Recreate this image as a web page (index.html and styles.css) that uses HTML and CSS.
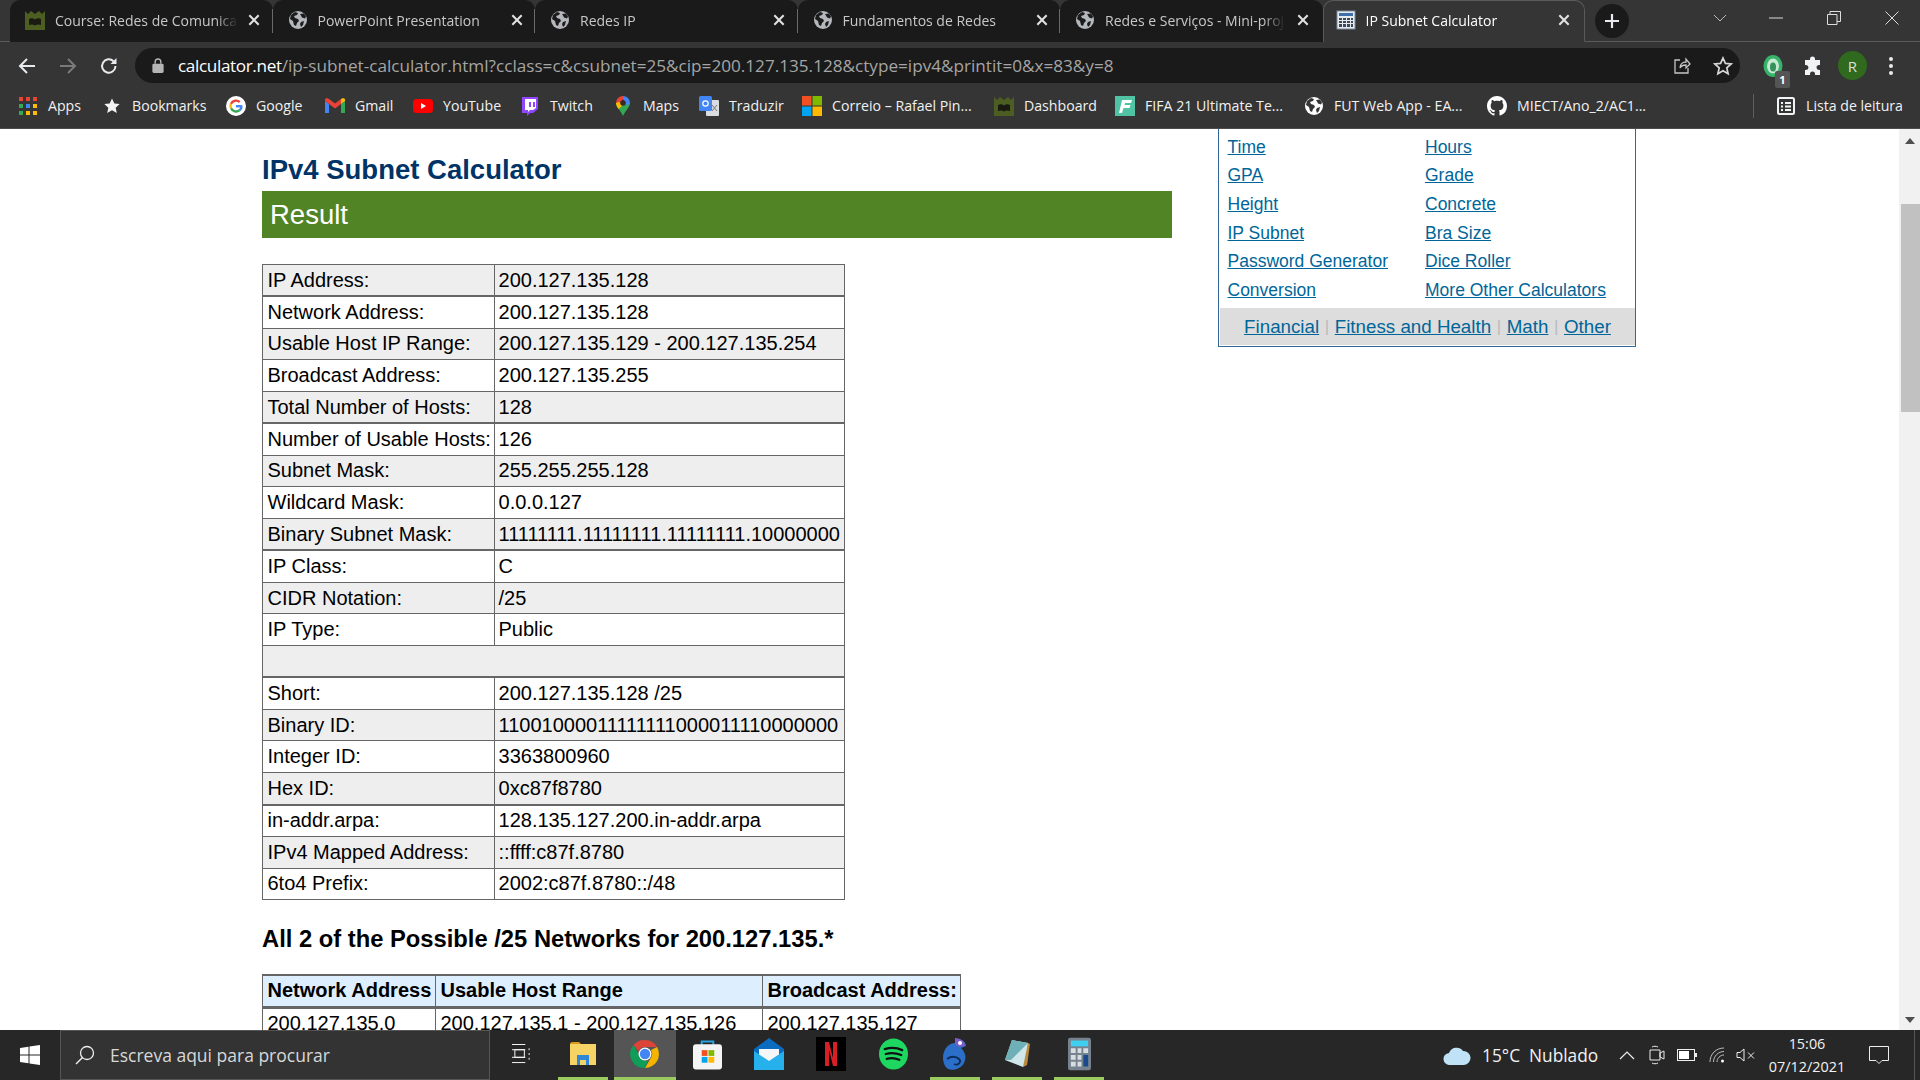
FILE: index.html
```html
<!DOCTYPE html>
<html lang="en">
<head>
<meta charset="utf-8">
<title>IP Subnet Calculator</title>
<link rel="stylesheet" href="styles.css">
</head>
<body>
<svg class="defs" aria-hidden="true">
  <symbol id="globe" viewBox="0 0 20 20">
    <circle cx="10" cy="10" r="9" fill="#b4b7bb"/>
    <path d="M3 5l4-3 3 1-1 2-3 1 1 2 3 1 1 2-2 2-1 3-2-1-1-4-3-2zM12 4l4-.5 2 3-1 2-3-1-1-2zM13 12l3-1-1 4-2 2-1-3z" fill="#1b1b1b"/>
  </symbol>
  <symbol id="globew" viewBox="0 0 20 20">
    <circle cx="10" cy="10" r="9" fill="#fff"/>
    <path d="M3 5l4-3 3 1-1 2-3 1 1 2 3 1 1 2-2 2-1 3-2-1-1-4-3-2zM12 4l4-.5 2 3-1 2-3-1-1-2zM13 12l3-1-1 4-2 2-1-3z" fill="#353535"/>
  </symbol>
  <symbol id="crown" viewBox="0 0 20 20">
    <path d="M0 1l3 3 3-3 4 3 4-3 3 3 3-3v19H0z" fill="#4c5e22"/>
    <path d="M4 9c2-1 4-1 6 .5 2-1.500 4-1.500 6-.5v6c-2-.8-4-.8-6 .5-2-1.300-4-1.300-6-.5z" fill="#1a1a12"/>
  </symbol>
  <symbol id="close" viewBox="0 0 12 12">
    <path d="M2 2l8 8M10 2l-8 8" stroke="currentColor" stroke-width="1.800" fill="none"/>
  </symbol>
</svg>

<header class="browser">
  <div class="tabstrip">
    <div class="tab sep">
      <svg class="fav"><use href="#crown"/></svg>
      <span class="title">Course: Redes de Comunicações</span>
      <svg class="x"><use href="#close"/></svg>
    </div>
    <div class="tab sep">
      <svg class="fav"><use href="#globe"/></svg>
      <span class="title">PowerPoint Presentation</span>
      <svg class="x"><use href="#close"/></svg>
    </div>
    <div class="tab sep">
      <svg class="fav"><use href="#globe"/></svg>
      <span class="title">Redes IP</span>
      <svg class="x"><use href="#close"/></svg>
    </div>
    <div class="tab sep">
      <svg class="fav"><use href="#globe"/></svg>
      <span class="title">Fundamentos de Redes</span>
      <svg class="x"><use href="#close"/></svg>
    </div>
    <div class="tab">
      <svg class="fav"><use href="#globe"/></svg>
      <span class="title short">Redes e Serviços - Mini-projeto</span>
      <svg class="x"><use href="#close"/></svg>
    </div>
    <div class="tab active">
      <svg class="fav" viewBox="0 0 20 20">
        <rect x="1" y="1" width="18" height="18" fill="#e8eaec" stroke="#7a8ca0"/>
        <rect x="3" y="3" width="14" height="3" fill="#3f6fa8"/>
        <path d="M3 8h3v2H3zM7 8h3v2H7zM11 8h3v2h-3zM15 8h2v2h-2zM3 11h3v2H3zM7 11h3v2H7zM11 11h3v2h-3zM15 11h2v2h-2zM3 14h3v3H3zM7 14h3v3H7zM11 14h3v3h-3zM15 14h2v3h-2z" fill="#3a4a5a"/>
      </svg>
      <span class="title">IP Subnet Calculator</span>
      <svg class="x"><use href="#close"/></svg>
    </div>
    <div class="newtab">
      <svg viewBox="0 0 16 16" width="16" height="16"><path d="M8 1v14M1 8h14" stroke="#e8eaed" stroke-width="2.200"/></svg>
    </div>
    <div class="winctl">
      <svg class="w-chev" viewBox="0 0 14 8" width="14" height="8"><path d="M1 1l6 6 6-6" stroke="#bbb" fill="none"/></svg>
      <svg class="w-min" viewBox="0 0 14 2" width="14" height="2"><path d="M0 1h14" stroke="#ddd"/></svg>
      <svg class="w-res" viewBox="0 0 14 14" width="14" height="14"><path d="M.5 3.500h9.500v10H.5zM3 3.500V.5h10.500v10H10" stroke="#ddd" fill="none"/></svg>
      <svg class="w-x" viewBox="0 0 14 14" width="14" height="14"><path d="M.5.5l13 13M13.500.5l-13 13" stroke="#ddd" fill="none"/></svg>
    </div>
  </div>

  <div class="toolbar">
    <svg class="nav nav-back" viewBox="0 0 18 18" width="18" height="18"><path d="M9 2L2 9l7 7M2 9h15" stroke="#e8eaed" stroke-width="2" fill="none"/></svg>
    <svg class="nav nav-fwd" viewBox="0 0 18 18" width="18" height="18"><path d="M9 2l7 7-7 7M16 9H1" stroke="#7a7a7a" stroke-width="2" fill="none"/></svg>
    <svg class="nav nav-rel" viewBox="0 0 18 18" width="18" height="18"><path d="M15.500 9A6.700 6.700 0 1 1 13.500 4.200" stroke="#e8eaed" stroke-width="2" fill="none"/><path d="M16.500 1v6h-6z" fill="#e8eaed"/></svg>
    <div class="omnibox">
      <svg class="lock" viewBox="0 0 12 16" width="12" height="15"><rect x="0" y="6" width="12" height="10" rx="1.500" fill="#b5b5b5"/><path d="M3 6V4a3 3 0 0 1 6 0v2" stroke="#b5b5b5" stroke-width="1.500" fill="none"/></svg>
      <span class="url"><span class="host">calculator.net</span>/ip-subnet-calculator.html?cclass=c&amp;csubnet=25&amp;cip=200.127.135.128&amp;ctype=ipv4&amp;printit=0&amp;x=83&amp;y=8</span>
      <svg class="omni-share" viewBox="0 0 18 18" width="18" height="18"><path d="M7 3H2v13h13v-5M7 11c0-4 3-6 6-6V2l4 5-4 4V8c-3 0-5 1-6 3z" stroke="#c4c7c5" stroke-width="1.300" fill="none"/></svg>
      <svg class="omni-star" viewBox="0 0 20 20" width="20" height="20"><path d="M10 2l2.400 5.400 5.800.6-4.400 3.900 1.300 5.800L10 14.700l-5.100 3 1.300-5.800L1.800 8l5.800-.6z" stroke="#d5d7d9" stroke-width="1.700" fill="none"/></svg>
    </div>
    <div class="ext-green">
      <svg viewBox="0 0 20 22" width="20" height="24"><ellipse cx="10" cy="11" rx="9.500" ry="11" fill="#35b46a"/><ellipse cx="10" cy="11" rx="6" ry="7.500" fill="#c5e9d2"/><ellipse cx="10" cy="12" rx="3" ry="4.500" fill="#35905c"/></svg>
      <span class="badge">1</span>
    </div>
    <svg class="puzzle" viewBox="0 0 20 20" width="20" height="20"><path d="M7 3a2.500 2.500 0 0 1 5 0v1h5v5h-1a2.500 2.500 0 0 0 0 5h1v5h-5v-1a2.500 2.500 0 0 0-5 0v1H2v-5h1a2.500 2.500 0 0 0 0-5H2V4h5z" fill="#f1f3f4"/></svg>
    <div class="avatar">R</div>
    <svg class="kebab" viewBox="0 0 4 18" width="4" height="18"><circle cx="2" cy="2" r="2" fill="#e8eaed"/><circle cx="2" cy="9" r="2" fill="#e8eaed"/><circle cx="2" cy="16" r="2" fill="#e8eaed"/></svg>
  </div>

  <nav class="bookmarks">
    <a class="bm bm-apps"><svg viewBox="-1 -1 20 20"><path d="M0 0h4v4H0z" fill="#ea4335"/><path d="M7 0h4v4H7z" fill="#ea4335"/><path d="M14 0h4v4h-4z" fill="#ea4335"/><path d="M0 7h4v4H0z" fill="#34a853"/><path d="M7 7h4v4H7z" fill="#4285f4"/><path d="M14 7h4v4h-4z" fill="#fbbc05"/><path d="M0 14h4v4H0z" fill="#34a853"/><path d="M7 14h4v4H7z" fill="#fbbc05"/><path d="M14 14h4v4h-4z" fill="#fbbc05"/></svg><span>Apps</span></a>
    <a class="bm bm-marks"><svg viewBox="-2 -2 24 24"><path d="M10 1l2.800 6 6.400.7-4.800 4.300 1.400 6.400L10 15.100l-5.800 3.300 1.400-6.400L.8 7.700l6.400-.7z" fill="#f1f3f4"/></svg><span>Bookmarks</span></a>
    <a class="bm bm-google"><svg viewBox="0 0 20 20"><circle cx="10" cy="10" r="10" fill="#fff"/><path d="M15.500 10.200H10" stroke="#4285f4" stroke-width="2.400"/><path d="M15.500 9.500a5.600 5.600 0 0 1-2 4.800" stroke="#4285f4" stroke-width="2.400" fill="none"/><path d="M13.500 14.300a5.600 5.600 0 0 1-8.500-2" stroke="#34a853" stroke-width="2.400" fill="none"/><path d="M5 12.300a5.600 5.600 0 0 1 0-4.600" stroke="#fbbc05" stroke-width="2.400" fill="none"/><path d="M5 7.700a5.600 5.600 0 0 1 8.700-1.700" stroke="#ea4335" stroke-width="2.400" fill="none"/></svg><span>Google</span></a>
    <a class="bm bm-gmail"><svg viewBox="0 -2 20 20"><path d="M0 3v12h4V6z" fill="#4285f4"/><path d="M16 6v9h4V3z" fill="#34a853"/><path d="M0 3l4 3 6 4.500 6-4.500V1l-6 4.500L4 1 2 0 0 1z" fill="#ea4335"/><path d="M16 1v5l4-3V1l-2-1z" fill="#fbbc05"/></svg><span>Gmail</span></a>
    <a class="bm bm-yt"><svg viewBox="0 -3 20 20"><rect width="20" height="14" rx="3.500" fill="#f00"/><path d="M8 4l5 3-5 3z" fill="#fff"/></svg><span>YouTube</span></a>
    <a class="bm bm-tw"><svg viewBox="-1 0 20 20"><path d="M1 1h16v12l-5 4H9l-3 3v-3H1z" fill="#9146ff"/><path d="M4 3h11v9l-3 2H9l-2 2v-2H4z" fill="#fff"/><path d="M8 6h2v5H8zM12 6h2v5h-2z" fill="#9146ff"/></svg><span>Twitch</span></a>
    <a class="bm bm-maps"><svg viewBox="-3 0 20 20"><path d="M7 20C5 15 0 11 0 7l7-1 7 1c0 4-5 8-7 13z" fill="#34a853"/><path d="M7 0a7 7 0 0 0-7 7l3 3 4-7z" fill="#ea4335"/><path d="M7 0a7 7 0 0 1 7 7L11 10 7 3z" fill="#4285f4"/><path d="M0 7c0 2 1 4 2.500 6L7 9 3 6z" fill="#fbbc05"/><circle cx="7" cy="7" r="2.800" fill="#3b2a1e"/></svg><span>Maps</span></a>
    <a class="bm bm-trad"><svg viewBox="0 0 20 20"><rect x="7" y="4" width="13" height="16" rx="1" fill="#dadce0"/><rect x="0" y="0" width="13" height="15" rx="1.500" fill="#4285f4"/><circle cx="6.500" cy="7.500" r="2.700" fill="none" stroke="#fff" stroke-width="1.200"/><path d="M13 9l5 6M18 9l-5 6" stroke="#777" stroke-width="1"/></svg><span>Traduzir</span></a>
    <a class="bm bm-mail"><svg viewBox="0 0 20 20"><path d="M0 0h9.500v9.500H0z" fill="#f25022"/><path d="M10.500 0H20v9.500h-9.500z" fill="#7fba00"/><path d="M0 10.500h9.500V20H0z" fill="#00a4ef"/><path d="M10.500 10.500H20V20h-9.500z" fill="#ffb900"/></svg><span>Correio – Rafael Pin...</span></a>
    <a class="bm bm-dash"><svg><use href="#crown"/></svg><span>Dashboard</span></a>
    <a class="bm bm-fifa"><svg viewBox="0 0 20 20"><rect width="20" height="20" fill="#4fc3a4"/><path d="M7 4h10l-1 3H10l-.5 2h6l-1 3H8.500L7 17H4z" fill="#fff"/></svg><span>FIFA 21 Ultimate Te...</span></a>
    <a class="bm bm-fut"><svg><use href="#globew"/></svg><span>FUT Web App - EA...</span></a>
    <a class="bm bm-gh"><svg viewBox="0 0 16 16"><path fill="#fff" d="M8 0C3.580 0 0 3.580 0 8c0 3.540 2.290 6.530 5.470 7.590.4.07.55-.17.55-.38 0-.19-.01-.82-.01-1.490-2.010.37-2.530-.49-2.690-.94-.09-.23-.48-.94-.82-1.130-.28-.15-.68-.52-.01-.53.63-.01 1.080.58 1.230.82.72 1.210 1.870.87 2.330.66.07-.52.28-.87.51-1.070-1.780-.2-3.640-.89-3.640-3.950 0-.87.31-1.590.82-2.150-.08-.2-.36-1.020.08-2.120 0 0 .67-.21 2.200.82.64-.18 1.320-.27 2-.27.68 0 1.360.09 2 .27 1.530-1.040 2.200-.82 2.200-.82.44 1.100.16 1.920.08 2.120.51.56.82 1.270.82 2.150 0 3.070-1.870 3.750-3.650 3.950.29.25.54.73.54 1.480 0 1.070-.01 1.930-.01 2.200 0 .21.15.46.55.38A8.013 8.013 0 0016 8c0-4.420-3.580-8-8-8z"/></svg><span>MIECT/Ano_2/AC1...</span></a>
    <a class="bm bm-read"><svg viewBox="-1 -1 20 20"><rect x="1" y="1" width="16" height="16" rx="1.500" fill="none" stroke="#f1f3f4" stroke-width="2"/><path d="M4 5h2v2H4zM8 5h6v2H8zM4 8.500h2v2H4zM8 8.500h6v2H8zM4 12h2v2H4zM8 12h6v2H8z" fill="#f1f3f4"/></svg><span>Lista de leitura</span></a>
  </nav>
</header>

<div class="viewport">
  <div class="page">
    <main class="content">
      <h1 class="pagetitle">IPv4 Subnet Calculator</h1>
      <h2 class="result">Result</h2>
      <table class="info">
        <tr><td>IP Address:</td><td>200.127.135.128</td></tr>
        <tr><td>Network Address:</td><td>200.127.135.128</td></tr>
        <tr><td>Usable Host IP Range:</td><td>200.127.135.129 - 200.127.135.254</td></tr>
        <tr><td>Broadcast Address:</td><td>200.127.135.255</td></tr>
        <tr><td>Total Number of Hosts:</td><td>128</td></tr>
        <tr><td>Number of Usable Hosts:</td><td>126</td></tr>
        <tr><td>Subnet Mask:</td><td>255.255.255.128</td></tr>
        <tr><td>Wildcard Mask:</td><td>0.0.0.127</td></tr>
        <tr><td>Binary Subnet Mask:</td><td>11111111.11111111.11111111.10000000</td></tr>
        <tr><td>IP Class:</td><td>C</td></tr>
        <tr><td>CIDR Notation:</td><td>/25</td></tr>
        <tr><td>IP Type:</td><td>Public</td></tr>
        <tr><td colspan="2">&nbsp;</td></tr>
        <tr><td>Short:</td><td>200.127.135.128 /25</td></tr>
        <tr><td>Binary ID:</td><td>11001000011111111000011110000000</td></tr>
        <tr><td>Integer ID:</td><td>3363800960</td></tr>
        <tr><td>Hex ID:</td><td>0xc87f8780</td></tr>
        <tr><td>in-addr.arpa:</td><td>128.135.127.200.in-addr.arpa</td></tr>
        <tr><td>IPv4 Mapped Address:</td><td>::ffff:c87f.8780</td></tr>
        <tr><td>6to4 Prefix:</td><td>2002:c87f.8780::/48</td></tr>
      </table>
      <h3 class="subhead">All 2 of the Possible /25 Networks for 200.127.135.*</h3>
      <table class="nets">
        <colgroup><col class="c1"><col class="c2"><col class="c3"></colgroup>
        <tr><th>Network Address</th><th>Usable Host Range</th><th>Broadcast Address:</th></tr>
        <tr><td>200.127.135.0</td><td>200.127.135.1 - 200.127.135.126</td><td>200.127.135.127</td></tr>
      </table>
    </main>
    <aside class="side">
      <div class="sidelinks">
        <a>Time</a><a>Hours</a>
        <a>GPA</a><a>Grade</a>
        <a>Height</a><a>Concrete</a>
        <a>IP Subnet</a><a>Bra Size</a>
        <a>Password Generator</a><a>Dice Roller</a>
        <a>Conversion</a><a>More Other Calculators</a>
      </div>
      <div class="sidefoot"><a>Financial</a><i>|</i><a>Fitness and Health</a><i>|</i><a>Math</a><i>|</i><a>Other</a></div>
    </aside>
  </div>
  <div class="scrollbar">
    <div class="arrow up"></div>
    <div class="thumb"></div>
    <div class="arrow down"></div>
  </div>
</div>

<footer class="taskbar">
  <div class="start"><svg viewBox="0 0 20 20" width="20" height="20"><path d="M0 3l8.500-1.200V9.500H0zM9.500 1.600L20 0v9.500H9.500zM0 10.500h8.500v7.700L0 17zM9.500 10.500H20V20L9.500 18.400z" fill="#fff"/></svg></div>
  <div class="search">
    <svg viewBox="0 0 20 20" width="20" height="20"><circle cx="12" cy="8" r="6.500" stroke="#eee" stroke-width="1.300" fill="none"/><path d="M7.500 12.500L1 19" stroke="#eee" stroke-width="1.500"/></svg>
    <span>Escreva aqui para procurar</span>
  </div>
  <div class="tb"><svg viewBox="0 0 20 20" width="19" height="20"><path d="M0 0h14M0 19h14M3 5.500h10v8H3zM0 5.500h14M0 13.500h14M18 4v2M18 9v2M18 14v2" stroke="#fff" fill="none"/></svg></div>
  <div class="tb run"><svg viewBox="0 0 28 26" width="28" height="26"><path d="M1 3c0-1 1-2 2-2h7l2 2h-11z" fill="#d99a1c"/><path d="M1 3h26v21H1z" fill="#f6d365"/><path d="M8 24V14h12v10h-3v-5h-6v5z" fill="#2f87d8"/></svg></div>
  <div class="tb run on"><svg viewBox="0 0 30 30" width="30" height="30"><path d="M15 1a14 14 0 0 1 12.100 7H15a7 7 0 0 0-6.500 4.400L3.500 6A14 14 0 0 1 15 1z" fill="#db4437"/><path d="M27.100 8A14 14 0 0 1 15 29l6-10.500A7 7 0 0 0 21 11z" fill="#f4b400"/><path d="M3.500 6L9 16a7 7 0 0 0 9 5.500L15 29A14 14 0 0 1 3.500 6z" fill="#0f9d58"/><circle cx="15" cy="15" r="6.500" fill="#fff"/><circle cx="15" cy="15" r="5.200" fill="#4285f4"/></svg></div>
  <div class="tb"><svg viewBox="0 0 30 32" width="29" height="32"><path d="M9 8V3h12v5" stroke="#2aa3e0" stroke-width="2" fill="none"/><rect y="6" width="30" height="26" rx="3" fill="#f4f4f4"/><path d="M9 12h6v6H9z" fill="#f25022"/><path d="M16 12h6v6h-6z" fill="#7fba00"/><path d="M9 19h6v6H9z" fill="#00a4ef"/><path d="M16 19h6v6h-6z" fill="#ffb900"/></svg></div>
  <div class="tb"><svg viewBox="0 0 30 32" width="30" height="32"><path d="M0 11L15 0l15 11v21H0z" fill="#0a6cc0"/><path d="M5 11h20v9L15 25 5 20z" fill="#f4f6f8"/><path d="M0 13l15 10 15-10v19H0z" fill="#27b1ec"/></svg></div>
  <div class="tb"><svg viewBox="0 0 30 34" width="30" height="34"><rect width="30" height="34" fill="#000"/><path d="M9 5h4l4 16V5h4v24h-4L13 13v16H9z" fill="#d81f26"/></svg></div>
  <div class="tb"><svg viewBox="0 0 30 32" width="29" height="32"><ellipse cx="15" cy="16" rx="15" ry="16" fill="#1ed760"/><path d="M6 11c6-2 13-1.500 18 1M7 16c5-1.500 11-1 16 1M8 21c4-1 9-.8 13 1" stroke="#111" stroke-width="2.400" fill="none" stroke-linecap="round"/></svg></div>
  <div class="tb run"><svg viewBox="0 0 26 34" width="26" height="34"><path d="M15 2c5 0 9 3 9 7l-5 2c4 4 6 9 3 15-3 6-11 8-16 6C1 29 0 20 2 15 4 9 9 6 13 6z" fill="#2c6fc9"/><path d="M13 1c6 0 10 4 10 8l-6 1-4-3z" fill="#7c5cc9"/><circle cx="18" cy="6" r="2" fill="#fff"/><path d="M5 22c4-3 9-3 12 0s-1 7-5 5" stroke="#0c2c5a" stroke-width="1.800" fill="none"/></svg></div>
  <div class="tb run"><svg viewBox="0 0 28 30" width="28" height="30"><path d="M9 1l16 3-1 21-4 3-18-7z" fill="#cfe6ea"/><path d="M9 1l16 3-17 17-6-0z" fill="#6fb0b8"/><path d="M25 4l2 1-3 21-4 2z" fill="#b98a3e"/></svg></div>
  <div class="tb run"><svg viewBox="0 0 24 34" width="23" height="34"><rect width="24" height="34" rx="2.500" fill="#76838f"/><rect x="3" y="3" width="18" height="6" fill="#3fd0f0"/><path d="M3 11h5v5H3zM10 11h4v5h-4zM16 11h5v5h-5zM3 18h5v5H3zM10 18h4v5h-4zM3 25h5v5H3zM10 25h4v5h-4z" fill="#d8dde2"/><rect x="16" y="18" width="5" height="12" fill="#164a8a"/></svg></div>
  <div class="tray">
    <svg class="t-cloud" viewBox="0 0 28 20" width="28" height="20"><path d="M7 20a6 6 0 0 1-1-12A8 8 0 0 1 20 6a7 7 0 0 1 1 14z" fill="#bfe2f7"/></svg>
    <span class="t-weather">15°C&nbsp; Nublado</span>
    <span class="t-ico"><svg viewBox="0 0 16 10" width="16" height="10"><path d="M1 9l7-7 7 7" stroke="#eee" stroke-width="1.200" fill="none"/></svg></span>
    <span class="t-ico"><svg viewBox="0 0 16 20" width="16" height="20"><path d="M1 5h10v10H1zM11 8l4-2v8l-4-2zM3 2c2-1 4-1 6 0M3 18c2 1 4 1 6 0" stroke="#eee" fill="none"/></svg></span>
    <span class="t-ico"><svg viewBox="0 0 20 12" width="20" height="12"><rect x=".5" y=".5" width="17" height="11" stroke="#eee" fill="none"/><rect x="2" y="2" width="10" height="8" fill="#fff"/><rect x="18" y="4" width="2" height="4" fill="#eee"/></svg></span>
    <span class="t-ico"><svg viewBox="0 0 16 16" width="16" height="16"><path d="M1 15C1 7 7 1 15 1M4.500 15c0-6 5-10.500 10.500-10.500M8 15c0-3.500 3-7 7-7" stroke="#bbb" fill="none"/><circle cx="13.500" cy="14" r="1.500" fill="#fff"/></svg></span>
    <span class="t-ico t-mute"><svg viewBox="0 0 20 14" width="20" height="14"><path d="M1 4.500h3L8 1v12L4 9.500H1zM12 4.500l6 6M18 4.500l-6 6" stroke="#eee" fill="none"/></svg></span>
    <div class="clock"><span>15:06</span><span>07/12/2021</span></div>
    <span class="t-note"><svg viewBox="0 0 20 20" width="20" height="20"><path d="M.5 1.500h19v14h-6.500L10 18.500 7 15.500H.5z" stroke="#eee" fill="none"/></svg></span>
    <span class="t-desk"></span>
  </div>
</footer>
</body>
</html>
```
FILE: styles.css
```css
* { box-sizing: border-box; }
html, body { margin: 0; height: 100%; overflow: hidden; }
body { display: flex; flex-direction: column; width: 1920px; height: 1080px; font-family: "Liberation Sans", Arial, sans-serif; background: #fff; }
.defs { position: absolute; width: 0; height: 0; }

/* browser chrome */
.browser { flex: none; background: #353535; color: #fff; font-family: "Open Sans", "Noto Sans", sans-serif; }
.tabstrip { height: 42px; display: flex; padding-left: 10px; border-bottom: 1px solid #5a5a5a; align-items: stretch; }
.tab { width: 262.500px; height: 42px; flex: none; display: flex; align-items: center; padding: 0 0 2px 15px; background: #1a1a1a; border-radius: 10px 10px 0 0; position: relative; color: #c8c8c8; font-size: 14px; }
.tab.sep::after { content: ""; position: absolute; right: 0; top: 9px; height: 24px; width: 1px; background: #6a6a6a; }
.tab .fav { width: 20px; height: 20px; flex: none; margin-right: 10px; }
.tab .title { width: 183px; overflow: hidden; white-space: nowrap; flex: none; -webkit-mask-image: linear-gradient(to right, #000 88%, transparent 100%); mask-image: linear-gradient(to right, #000 88%, transparent 100%); }
.tab .title.short { width: 180px; margin-right: 2px; }
.tab .x { width: 14px; height: 14px; flex: none; margin-left: 9px; color: #e0e0e0; }
.tab.active { background: #353535; color: #fff; border: 1px solid #5a5a5a; border-bottom-color: #353535; width: 262px; padding-left: 12px; }
.tab.active .x { margin-left: 8px; }
.newtab { width: 34px; height: 34px; flex: none; margin: 4px 0 0 10px; border-radius: 50%; background: #1a1a1a; display: flex; align-items: center; justify-content: center; }
.winctl { flex: 1; display: flex; align-items: center; height: 36px; }
.winctl svg { flex: none; }
.w-chev { margin-left: 84px; }
.w-min { margin-left: 42px; }
.w-res { margin-left: 44px; }
.w-x { margin-left: 44px; }

.toolbar { height: 43px; display: flex; align-items: center; padding: 4px 0 0 18px; }
.nav { flex: none; margin-right: 23px; }
.nav-rel { margin-right: 17px; }
.omnibox { width: 1605px; height: 35px; border-radius: 18px; background: #1a1a1a; display: flex; align-items: center; padding-left: 17px; flex: none; }
.lock { flex: none; margin-right: 14px; }
.url { flex: none; width: 1495px; font-size: 17.150px; color: #a5a5a5; white-space: nowrap; overflow: hidden; font-family: "Open Sans", sans-serif; }
.host { color: #fff; letter-spacing: -.37px; }
.omni-share { flex: none; }
.omni-star { flex: none; margin-left: 22px; }
.ext-green { width: 20px; height: 24px; margin-left: 23px; position: relative; flex: none; }
.badge { position: absolute; right: -7px; bottom: -10px; width: 15px; height: 17px; background: #555; color: #fff; font-size: 11px; font-weight: 700; display: flex; align-items: center; justify-content: center; border-radius: 2px; }
.puzzle { flex: none; margin-left: 20px; }
.avatar { width: 29px; height: 29px; border-radius: 50%; background: #2f6a1e; color: #ddd; font-size: 15px; display: flex; align-items: center; justify-content: center; flex: none; margin-left: 15px; }
.kebab { flex: none; margin-left: 22px; }

.bookmarks { height: 44px; display: flex; align-items: center; border-bottom: 1px solid #4d4d4d; font-size: 14.150px; padding: 0 0 2px 18px; }
.bm { display: flex; align-items: center; flex: none; white-space: nowrap; color: #f1f1f1; }
.bm svg { flex: none; width: 20px; height: 20px; margin-right: 10px; }
.bm-apps { width: 84px; }
.bm-marks { width: 124px; }
.bm-google { width: 99px; }
.bm-gmail { width: 88px; }
.bm-yt { width: 107px; }
.bm-tw { width: 93px; }
.bm-maps { width: 86px; }
.bm-trad { width: 103px; }
.bm-mail { width: 192px; }
.bm-dash { width: 121px; }
.bm-fifa { width: 189px; }
.bm-fut { width: 183px; }
.bm-gh { width: 266px; }
.bm-read { flex: none; padding-left: 22px; border-left: 1px solid #5f5f5f; height: 24px; }

/* page */
.viewport { flex: 1; min-height: 0; display: flex; overflow: hidden; }
.page { flex: 1; display: flex; padding-left: 262px; align-items: flex-start; overflow: hidden; color: #000; }
.content { width: 910px; flex: none; padding-top: 22px; }
.pagetitle { margin: 0 0 3px; font-size: 27.500px; line-height: 37px; font-weight: 700; color: #003366; }
.result { margin: 0; height: 47px; background: #518425; color: #fff; font-size: 27.500px; font-weight: 400; line-height: 47px; padding-left: 8px; }
.info { margin-top: 26px; border-collapse: collapse; font-size: 20px; }
.info td { height: 31.770px; padding: 0 4.500px 1px; border: 1px solid #666; line-height: 24px; white-space: nowrap; }
.info td:first-child { padding-right: 3.500px; }
.info td:nth-child(2) { padding-left: 3.100px; }
.info tr:nth-child(odd) { background: #eee; }
.info tr:nth-child(4n+1) td { border-bottom-width: 2px; }
.subhead { margin: 24px 0 0; font-size: 23.750px; line-height: 30px; font-weight: 700; color: #000; }
.nets { margin-top: 20px; border-collapse: collapse; font-size: 20px; width: 698px; table-layout: fixed; }
.c1 { width: 173px; }
.c2 { width: 327px; }
.c3 { width: 198px; }
.nets th, .nets td { padding: 0 4.500px 1px; text-align: left; border: 1px solid #666; height: 32px; white-space: nowrap; }
.nets th { background: #ddeeff; border-top-width: 2px; border-bottom-width: 3px; }

.side { width: 418px; flex: none; margin-left: 46px; border: 1px solid #336699; border-top: 0; padding: 4px 0 1px 1px; font-size: 17.500px; }
.side a { color: #006699; text-decoration: underline; }
.sidelinks { display: grid; grid-template-columns: 197.500px 1fr; grid-auto-rows: 28.600px; align-items: center; padding: 0 0 3px 7.500px; }
.sidefoot { background: #ddd; height: 37px; font-size: 18.750px; display: flex; align-items: center; justify-content: center; padding-top: 1px; }
.sidefoot i { font-style: normal; color: #bbb; margin: 0 5.600px; font-size: 17px; }

.scrollbar { width: 21px; flex: none; background: #f1f1f1; display: flex; flex-direction: column; align-items: center; padding-top: 9px; }
.arrow { width: 0; height: 0; border-left: 5px solid transparent; border-right: 5px solid transparent; flex: none; }
.arrow.up { border-bottom: 6px solid #505050; }
.arrow.down { border-top: 6px solid #505050; margin-top: 605px; }
.thumb { width: 19px; margin-left: 2px; height: 208px; background: #c1c1c1; flex: none; margin-top: 60px; }

/* taskbar */
.taskbar { height: 50px; flex: none; background: #272727; display: flex; align-items: stretch; color: #f2f2f2; font-family: "Open Sans", "Noto Sans", sans-serif; }
.start { width: 60px; flex: none; display: flex; align-items: center; justify-content: center; }
.search { width: 430px; flex: none; background: #333; border: 1px solid #555; display: flex; align-items: center; padding-left: 14px; font-size: 17.500px; color: #d8d8d8; }
.search svg { margin-right: 15px; flex: none; }
.tb { width: 62px; flex: none; display: flex; align-items: center; justify-content: center; position: relative; padding-bottom: 2px; }
.tb.run::after { content: ""; position: absolute; left: 6px; right: 6px; bottom: 0; height: 3px; background: #9acb5e; }
.tb.on { background: #555; }
.tb.on::after { left: 0; right: 0; }
.tray { margin-left: auto; display: flex; align-items: center; flex: none; }
.t-cloud { flex: none; margin-right: 11px; }
.t-weather { width: 130px; font-size: 17.300px; white-space: nowrap; flex: none; }
.t-ico { width: 30px; flex: none; display: flex; justify-content: center; }
.t-mute { width: 28px; }
.clock { width: 94px; flex: none; display: flex; flex-direction: column; align-items: center; font-size: 14.400px; line-height: 23px; }
.t-note { width: 50px; flex: none; display: flex; justify-content: center; }
.t-desk { width: 16px; height: 50px; flex: none; background: linear-gradient(to right, transparent 10px, #555 10px, #555 11px, transparent 11px); }
```
